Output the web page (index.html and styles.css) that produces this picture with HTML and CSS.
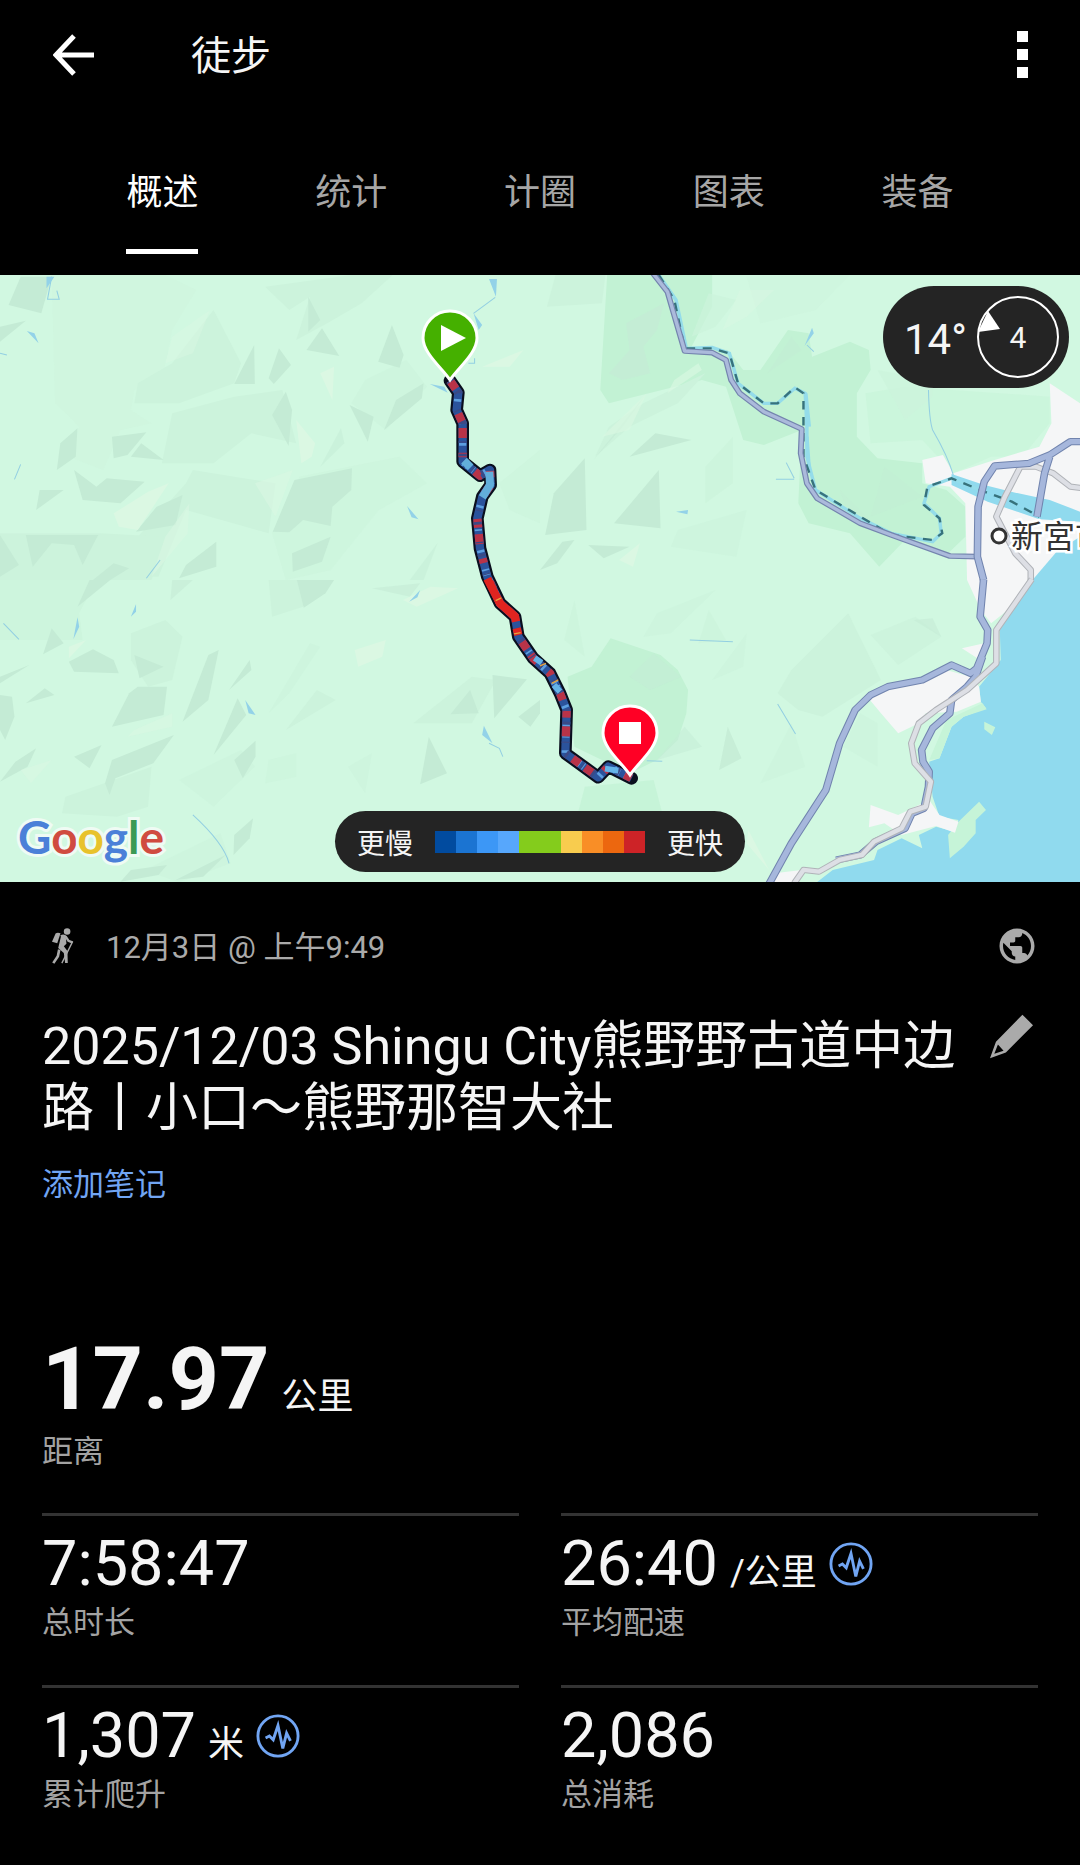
FILE: index.html
```html
<!DOCTYPE html>
<html lang="zh-CN">
<head>
  <meta charset="UTF-8" />
  <meta name="viewport" content="width=device-width, initial-scale=1" />
  <title>徒步</title>
  <link rel="stylesheet" href="styles.css">
</head>
<body>

  <header class="top-bar">
    <button class="icon-button" aria-label="返回">
      <svg width="42" height="42" viewBox="0 0 42 42"><path d="M41 21H4M21 2L3 21l18 19" fill="none" stroke="#fff" stroke-width="5" /></svg>
    </button>
    <h1>徒步</h1>
    <button class="icon-button menu-button" aria-label="更多">
      <svg width="12" height="48" viewBox="0 0 12 48"><path d="M0 0h11v11H0zM0 18h11v11H0zM0 36h11v11H0z" fill="#fff" /></svg>
    </button>
  </header>

  <nav class="tabs">
    <a class="tab active" href="#overview">概述</a>
    <a class="tab" href="#stats">统计</a>
    <a class="tab" href="#laps">计圈</a>
    <a class="tab" href="#charts">图表</a>
    <a class="tab" href="#gear">装备</a>
  </nav>

  <section class="map">
    <svg class="map-canvas" viewBox="0 275 1080 607" preserveAspectRatio="xMidYMid slice">
      <rect y="275" width="1080" height="607" fill="#d1f8e1" />

      <!-- Terrain, north west -->
      <g transform="translate(0 270) scale(.3444 .3333)">
        <g class="shade-soft">
          <path d="M150 15L480 15 570 60 500 180 470 330 390 360 380 420 440 460 350 480 300 600 200 560 230 470 160 400z" opacity=".3" />
          <path d="M620 120L700 280 680 340 520 400 390 400 400 340 500 280z" />
          <path d="M770 50L1020 15 1140 15 1050 100 950 160 860 210 900 80 840 120z" />
          <path d="M500 430L680 380 820 360 860 520 730 490 620 580 470 580z" />
          <path d="M560 600L800 640 780 790 540 720 460 920 340 920 400 800 540 640z" />
          <path d="M0 790L290 790 480 800 440 930 0 930z" />
          <path d="M1180 270L1240 350 1120 480 1020 400 1060 330z" opacity=".6" />
          <path d="M870 620L1160 560 1240 640 1100 720 960 900 830 930 790 790z" opacity=".5" />
          <path d="M1450 640L1568 540 1568 760 1480 720z" opacity=".5" />
        </g>
        <g class="shade">
          <path d="M60 20L150 20 120 130 25 105z" />
          <path d="M0 170L75 152 0 215z" />
          <path d="M738 225L740 342 680 342z" />
          <path d="M810 235L845 285 795 342 780 325z" />
          <path d="M935 175L985 258 890 240z" />
          <path d="M895 80L930 150 895 185z" />
          <path d="M1138 165L1172 255 1160 293 1098 275z" />
          <path d="M830 365L848 420 838 528 790 435z" />
          <path d="M1015 405L1085 440 1068 515z" />
          <path d="M1150 390L1230 340 1225 385 1115 480z" />
          <path d="M225 475L220 560 165 600 175 520z" />
          <path d="M325 500L425 487 370 555 330 565z" />
          <path d="M410 520L475 570 380 560z" />
          <path d="M215 600L280 650 310 625 420 635 350 700 240 690z" />
          <path d="M115 660L185 660 105 720z" />
          <path d="M855 630L1022 595 1020 660 965 710 960 768 880 750 840 787 792 785z" />
          <path d="M455 710L530 675 510 765 395 785z" />
          <path d="M75 795L285 795 240 885 215 825 150 820 95 890z" />
          <path d="M0 795L55 885 0 920z" />
          <path d="M628 815L628 890 520 925 540 885z" />
          <path d="M848 850L960 800 935 875 850 905z" />
          <path d="M270 930L330 880 375 895 320 930z" />
          <path d="M990 475L1000 520 930 590z" opacity=".5" />
          <path d="M1270 820L1190 930 1230 930z" opacity=".5" />
        </g>
        <g class="sand">
          <path d="M930 310L970 290 965 390z" />
          <path d="M860 450L915 520 905 560 875 580z" />
          <path d="M330 730L430 665 490 640 400 780 345 770z" />
          <path d="M1400 290L1520 240 1480 290z" />
          <path d="M740 640L850 600 800 740z" opacity=".5" />
          <path d="M500 200L610 120 560 250 480 280z" opacity=".4" />
          <path d="M480 800L550 700 545 790 440 920z" opacity=".5" />
        </g>
        <g class="stream">
          <path d="M150 20L138 88 172 88 165 62M0 250L20 255M60 583L42 628M465 870L425 925M1375 130L1438 82M1360 280h18v-15" />
          <path class="pond" d="M135 20L158 20 135 55zM78 183L100 190 112 220zM1182 708L1215 748 1195 742zM1420 27L1443 27 1440 80zM1375 130L1400 165 1390 180zM1248 342L1290 350 1300 368z" />
        </g>
      </g>

      <!-- Terrain, south west -->
      <g transform="translate(0 580) scale(.3444 .3333)">
        <g class="shade-soft">
          <path d="M0 0L280 0 230 100 240 180 0 180z" opacity=".7" />
          <path d="M380 160L480 120 530 170 500 300 430 320 380 240z" />
          <path d="M780 0L950 0 880 80 790 110z" />
          <path d="M190 650L440 560 430 680 340 710 180 700z" />
          <path d="M920 330L975 360 830 450z" />
          <path d="M1200 430L1370 290 1440 300 1370 430z" />
          <path d="M520 600L700 510 740 560 620 680z" opacity=".6" />
          <path d="M780 400L900 190 930 200 840 340z" opacity=".6" />
          <path d="M1010 560L1080 520 1060 640z" opacity=".6" />
          <path d="M780 540L860 520 860 590 770 610z" opacity=".5" />
          <path d="M420 870L640 760 670 850 520 907z" opacity=".6" />
        </g>
        <g class="shade">
          <path d="M320 0L225 80 260 0z" />
          <path d="M500 0L560 0 495 60z" opacity=".6" />
          <path d="M862 0L970 0 945 40 882 83z" />
          <path d="M1080 25L1220 10 1190 50z" opacity=".6" />
          <path d="M200 245L270 208 330 240 345 280 215 275z" />
          <path d="M390 225L475 260 405 295z" />
          <path d="M150 145L185 190 125 223z" />
          <path d="M605 225L635 210 605 360 530 425z" />
          <path d="M375 340L400 320 485 320 475 405 325 440z" />
          <path d="M725 240L730 270 665 330z" />
          <path d="M0 290L85 255 0 310z" />
          <path d="M0 345L35 350 42 410 15 480 0 450z" />
          <path d="M130 325L158 345 75 370z" />
          <path d="M105 505L80 560 0 605 45 545z" />
          <path d="M295 495L260 565 215 530z" />
          <path d="M325 540L505 465 445 550 335 595 318 645 305 610z" />
          <path d="M690 355L715 405 620 525z" />
          <path d="M742 482L742 530 705 595 680 540z" />
          <path d="M1245 470L1298 580 1220 613z" />
          <path d="M1430 285L1530 298 1435 415z" />
          <path d="M1365 330L1390 400 1308 403z" />
          <path d="M1568 360L1568 400 1540 440 1505 410z" />
          <path d="M735 715L725 775 678 825 680 765z" />
          <path d="M380 870L485 855 460 885 350 905z" />
          <path d="M655 825L590 890 510 900z" />
        </g>
        <g class="sand">
          <path d="M1170 60L1250 20 1330 25 1210 80z" />
          <path d="M1030 210L1120 180 1110 230 1040 260z" />
          <path d="M390 450L500 400 500 440 370 470z" opacity=".5" />
          <path d="M60 570L150 540 90 610z" opacity=".5" />
          <path d="M200 200L250 180 200 235z" />
        </g>
        <g class="stream">
          <path d="M10 130L55 178M560 705Q650 790 665 850M1420 490L1450 505 1460 530" />
          <path class="pond" d="M225 112L230 140 213 178zM395 72L395 95 380 110zM712 360L742 405 722 400zM1220 30L1212 52 1188 65zM1405 437L1430 490 1400 465z" />
        </g>
      </g>

      <!-- Terrain, north east -->
      <g transform="translate(540 270) scale(.3444 .3333)">
        <g class="forest">
          <path d="M195 15L500 15 500 110 440 230 545 240 590 300 640 300 720 180 780 190 790 260 900 215 955 240 960 300 920 370 920 500 980 565 1110 580 1110 640 1180 660 1235 710 1235 800 1180 855 1060 810 985 890 900 790 780 760 750 700 760 480 650 525 590 510 540 350 470 330 200 400 175 360z" />
          <path d="M945 370L1060 350 1480 380 1480 460 1400 560 1310 560 1200 610 1110 510 960 520z" opacity=".4" />
        </g>
        <g class="shade-soft">
          <path d="M45 15L190 15 180 100 20 110z" />
          <path d="M490 70L570 90 510 170 440 200z" opacity=".7" />
          <path d="M300 400L480 310 400 400 260 470 160 560 200 470z" />
          <path d="M480 590L560 500 560 640 480 700z" opacity=".7" />
          <path d="M400 780L600 720 570 860 380 830z" opacity=".6" />
          <path d="M980 300L1140 330 1140 380 1060 450z" opacity=".7" />
          <path d="M600 20L900 15 800 120 640 160z" opacity=".4" />
        </g>
        <g class="shade">
          <path d="M360 100L340 180 300 230 320 310 240 330 200 310 260 240 250 160z" opacity=".7" />
          <path d="M130 565L135 780 15 795 40 670z" />
          <path d="M345 600L350 775 215 760z" />
          <path d="M335 490L440 510 260 560z" />
          <path d="M140 825L260 830 185 865z" />
          <path d="M65 815L100 810 50 880 0 900z" />
          <path d="M310 370L240 470 155 570z" opacity=".7" />
          <path d="M730 200L760 240 660 310z" opacity=".4" />
          <path d="M1000 590L1110 680 960 740z" opacity=".3" />
          <path d="M870 660L990 780 900 750z" opacity=".3" />
        </g>
        <g class="sand">
          <path d="M390 330L460 280 470 300 370 370z" opacity=".6" />
          <path d="M180 500L310 370 260 480z" opacity=".6" />
          <path d="M230 870L290 820 270 890z" />
          <path d="M580 60L680 60 600 140 530 180z" opacity=".4" />
        </g>
        <path class="urban" d="M1110 570L1170 555 1200 610 1320 570 1450 530 1485 460 1480 340 1568 400 1568 930 1240 930 1235 700 1190 650 1120 640z" />
        <path class="sea" d="M1195 612L1290 645 1380 668 1480 690 1568 725 1568 755 1450 748 1300 695 1195 645z" />
        <path class="sea" d="M1430 930L1500 845 1568 800 1568 930z" />
        <path class="river" d="M345 15L395 90 425 235 500 232 550 250 575 340 650 400 690 400 740 355 770 370 775 470 775 560 800 660 930 745 1020 790 1140 815 1165 790 1160 745 1115 700 1130 650 1195 625 1290 665" />
        <path class="river" d="M772 370L782 470M775 500L782 600" stroke-width="14" />
        <g class="stream">
          <path d="M1128 360Q1130 450 1140 480Q1185 560 1200 615M685 628L738 628M715 578L738 625M775 225L795 245" />
          <path class="pond" d="M790 173L795 190 768 228zM395 725L430 720 428 733z" />
        </g>
        <path class="border-line" d="M345 15L390 90 420 235 500 235 550 250 575 340 650 400 690 400 740 352 765 370 765 560 800 660 930 740 1020 795 1140 810 1168 790 1160 745 1115 705 1125 650 1195 625 1290 665 1370 695 1450 740" />
      </g>

      <!-- Terrain and coast, south east -->
      <g transform="translate(540 580) scale(.3444 .3333)">
        <g class="forest">
          <path d="M205 175L350 225 400 270 430 330 425 400 400 480 340 540 240 590 180 540 100 500 80 290 150 260z" />
          <path d="M130 620L330 600 355 700 110 700z" opacity=".7" />
        </g>
        <g class="shade-soft">
          <path d="M895 100L990 300 820 410 750 390 690 340 730 270z" />
          <path d="M960 165L1090 110 1165 170 1040 255z" opacity=".8" />
          <path d="M930 400L980 430 980 560 880 500z" opacity=".6" />
          <path d="M730 430L770 560 640 610z" opacity=".6" />
          <path d="M100 60L70 180 130 230z" opacity=".7" />
          <path d="M340 100L510 30 380 160 300 170z" opacity=".6" />
          <path d="M490 90L540 180 460 190z" opacity=".7" />
          <path d="M600 160L590 260 500 300z" opacity=".6" />
        </g>
        <g class="shade">
          <path d="M545 440L585 535 520 570z" opacity=".8" />
          <path d="M1085 120L1140 115 1165 170z" opacity=".6" />
          <path d="M330 220L410 290 320 330 260 290z" opacity=".5" />
          <path d="M420 440L470 500 340 540z" opacity=".5" />
        </g>
        <path class="sea" d="M1432 0L1335 150 1338 240 1275 320 1280 365 1295 385 1230 410 1195 440 1160 535 1130 545 1140 650 1160 710 1215 720 1205 755 1150 740 1100 765 1110 805 1050 775 980 810 970 840 850 870 800 910 1568 910 1568 0z" />
        <path class="forest-flat" d="M1185 765L1215 725 1275 665 1295 690 1265 720 1265 760 1230 800 1190 835zM1290 425L1322 442 1312 465 1290 448zM1180 420L1285 370 1297 388 1230 410 1195 440 1160 535 1130 540z" />
        <path class="urban" d="M950 350L1180 270 1250 290 1275 320 1280 365 1210 395 1120 400 1100 430 1040 460 990 400z" />
        <path class="urban" d="M1240 0L1432 0 1370 80 1310 130 1280 90zM1225 205L1290 190 1270 235zM960 675L1040 705 1130 660 1160 705 1215 725 1205 758 1150 738 1050 765 1000 730 955 742zM680 880L760 870 740 910 670 910z" />
        <path class="sand" d="M605 750L665 870 600 790z" />
        <g class="stream"><path d="M435 180L560 185M690 372L742 462M310 542L355 544" /></g>
      </g>

      <!-- Roads: a dark casing with a light line on top -->
      <defs>
        <g id="highway-north">
          <path d="M1578 515H1540L1480 555 1420 580 1320 588 1290 635 1272 710 1270 860 1288 930M1480 560L1465 610 1443 740" />
        </g>
        <g id="road-north">
          <path d="M328 10L370 65 420 243 500 248 540 270 555 330 580 370 650 425 760 477 757 550 775 640 805 685 930 760 1020 795 1190 858 1270 860" />
        </g>
        <g id="rail-north">
          <path d="M1578 655L1540 650 1490 610 1440 590 1395 590 1350 680 1325 740 1380 850 1425 900V930" />
        </g>
        <g id="highway-south">
          <path d="M1288 -2L1278 110 1300 150 1298 190 1268 265 1250 280 1195 255 1110 300 1010 320 960 345 915 390 870 490 830 630 730 790 665 912" />
          <path d="M1285 230L1265 290 1240 320 1195 360 1190 400 1140 445 1108 510 1112 545 1130 575 1128 620 1115 685 1080 700 1060 745 975 785 930 825 860 840" />
        </g>
        <g id="rail-south">
          <path d="M1428 -2L1325 150V250L1240 330 1150 390 1100 430 1078 490 1088 550 1135 605 1120 680 1075 695 1050 745 970 785 935 825 870 840 810 875 765 870 738 910" />
        </g>
      </defs>
      <g transform="translate(540 270) scale(.3444 .3333)">
        <use href="#rail-north" class="rail-case" /><use href="#rail-north" class="rail" />
        <use href="#road-north" class="road-case" /><use href="#road-north" class="road" />
        <use href="#highway-north" class="highway-case" /><use href="#highway-north" class="highway" />
      </g>
      <g transform="translate(540 580) scale(.3444 .3333)">
        <use href="#highway-south" class="highway-case" /><use href="#highway-south" class="highway" />
        <use href="#rail-south" class="rail-case" /><use href="#rail-south" class="rail" />
      </g>

      <circle cx="999" cy="536" r="7" fill="#fff" stroke="#333" stroke-width="3" />
      <text class="place" x="1011" y="548">新宮市</text>

      <!-- Recorded track, coloured by pace -->
      <g transform="translate(400 290) scale(.3333)" class="track">
        <defs>
          <path id="track" d="M150 272L175 308 170 360 188 400 188 515 240 557 270 540 272 585 247 620 232 685 240 775 262 860 300 940 345 980 355 1040 400 1105 450 1150 480 1210 500 1260 496 1390 595 1462 625 1430 695 1465" />
        </defs>
        <use href="#track" stroke="#0a0f1e" stroke-width="38" stroke-linecap="round" />
        <use href="#track" stroke="#2b539c" stroke-width="25" />
        <use href="#track" stroke="#5c9fe0" stroke-width="22" stroke-dasharray="5 16 4 38 8 51 5 9" />
        <use href="#track" stroke="#b93348" stroke-width="25" stroke-dasharray="30 78 26 20 30 44 14 60 22 35 20 26" />
        <use href="#track" stroke="#3b4a86" stroke-width="25" stroke-dasharray="4 33 8 52" />
        <path d="M192 512L212 532M268 545L270 585 247 622" stroke="#62aedb" stroke-width="24" />
        <path d="M262 866L300 940 345 980 348 995M350 1015L355 1035" stroke="#e02420" stroke-width="25" />
        <path d="M287 932L304 924M342 1032L362 1028M420 1128L438 1120M455 1180L475 1170" stroke="#e7a33a" stroke-width="4" />
        <path d="M404 1104L425 1118M462 1185L480 1205M615 1436L655 1442" stroke="#64b4e8" stroke-width="18" />
      </g>

      <!-- Start and finish pins -->
      <g stroke="#fff" stroke-width="3">
        <path d="M450 380C442 368 423 353 423 338a27 27 0 0 1 54 0C477 353 458 368 450 380z" fill="#45b000" />
        <path d="M630 775C622 763 603 748 603 733a27 27 0 0 1 54 0C657 748 638 763 630 775z" fill="#ff0025" />
      </g>
      <path d="M441 325L466 338 441 351z" fill="#fff" />
      <path d="M619 722h22v22h-22z" fill="#fff" />
    </svg>

    <div class="weather">
      <span class="temperature">14°</span>
      <svg width="84" height="84" viewBox="0 0 84 84">
        <circle cx="42" cy="42" r="40" fill="none" stroke="#fff" stroke-width="2" />
        <path d="M12 16L24 34 2 37z" fill="#fff" />
        <text class="wind" x="42" y="53" text-anchor="middle">4</text>
      </svg>
    </div>

    <div class="google">
      <span class="g-blue">G</span><span class="g-red">o</span><span class="g-yellow">o</span><span class="g-blue">g</span><span class="g-green">l</span><span class="g-red">e</span>
    </div>

    <div class="legend">
      <span>更慢</span>
      <div class="pace-bar"></div>
      <span>更快</span>
    </div>
  </section>

  <main class="details">
    <div class="meta">
      <svg width="25" height="38" viewBox="150 80 76 114">
        <circle cx="202" cy="93" r="10" fill="#aaa" />
        <path d="M156 124L167 99Q172 95 182 98L172 129z" fill="#aaa" />
        <path d="M183 108Q192 102 199 110L206 121 218 126" fill="none" stroke="#aaa" stroke-width="7" />
        <path d="M184 105L198 109 200 130 192 138 203 152 204 189 196 189 192 158 175 143z" fill="#aaa" />
        <path d="M178 148L174 168 160 189" fill="none" stroke="#aaa" stroke-width="8" />
        <path d="M219 123L186 189" stroke="#aaa" stroke-width="4" />
      </svg>
      <time datetime="2025-12-03T09:49">12月3日 @ 上午9:49</time>
      <svg class="globe" width="42" height="42" viewBox="0 0 24 24">
        <path fill="#aaa" d="M12 2C6.480 2 2 6.480 2 12s4.480 10 10 10 10-4.480 10-10S17.520 2 12 2zm-1 17.930c-3.950-.490-7-3.850-7-7.930 0-.620.080-1.210.210-1.790L9 15v1c0 1.100.900 2 2 2v1.930zm6.900-2.540c-.260-.810-1-1.390-1.900-1.390h-1v-3c0-.550-.450-1-1-1H8v-2h2c.550 0 1-.450 1-1V7h2c1.100 0 2-.900 2-2v-.410c2.930 1.190 5 4.060 5 7.410 0 2.080-.800 3.970-2.100 5.390z" />
      </svg>
    </div>

    <div class="title-row">
      <h2>2025/12/03 Shingu City熊野野古道中边路丨小口～熊野那智大社</h2>
      <button class="icon-button" aria-label="编辑">
        <svg width="45" height="45" viewBox="90 336 134 136">
          <path fill="#aaa" fill-rule="evenodd" d="M190 338L222 370 140 452 92 470 110 420zM116 428L105 456 133 447z" />
        </svg>
      </button>
    </div>

    <a class="add-note" href="#note">添加笔记</a>

    <div class="stat main-stat">
      <div class="value">17.97 <span class="unit">公里</span></div>
      <div class="label">距离</div>
    </div>

    <div class="stats">
      <div class="stat">
        <div class="value">7:58:47</div>
        <div class="label">总时长</div>
      </div>
      <div class="stat">
        <div class="value">26:40 <span class="unit">/公里</span>
          <svg class="pulse" width="44" height="44" viewBox="0 0 46 46"><circle cx="23" cy="23" r="21" /><path d="M10 25l4-2 4 4 5-15 5 24 4-16 4 8" /></svg>
        </div>
        <div class="label">平均配速</div>
      </div>
      <div class="stat">
        <div class="value">1,307 <span class="unit">米</span>
          <svg class="pulse" width="44" height="44" viewBox="0 0 46 46"><circle cx="23" cy="23" r="21" /><path d="M10 25l4-2 4 4 5-15 5 24 4-16 4 8" /></svg>
        </div>
        <div class="label">累计爬升</div>
      </div>
      <div class="stat">
        <div class="value">2,086</div>
        <div class="label">总消耗</div>
      </div>
    </div>
  </main>

</body>
</html>
```
FILE: styles.css
```css
* {
  box-sizing: border-box;
}

body {
  margin: 0;
  background: #000;
  color: #f5f5f5;
  font-family: Roboto, "Noto Sans CJK SC", sans-serif;
}

h1,
h2 {
  margin: 0;
  font-weight: 400;
}

.icon-button {
  display: flex;
  padding: 0;
  border: none;
  background: none;
  cursor: pointer;
}

/* Header */
.top-bar {
  display: flex;
  align-items: center;
  height: 110px;
  padding: 0 51px 0 53px;
}

.top-bar h1 {
  margin-left: 96px;
  padding-top: 4px;
  font-size: 40px;
  line-height: 48px;
}

.menu-button {
  margin-left: auto;
}

.tabs {
  display: grid;
  grid-template-columns: repeat(5, 1fr);
  justify-items: center;
  padding: 57px 68px 21px;
}

.tab {
  padding-bottom: 30px;
  border-bottom: 5px solid transparent;
  color: #a6a6a6;
  font-size: 36px;
  line-height: 52px;
  text-decoration: none;
}

.tab.active {
  border-color: #fff;
  color: #fff;
}

/* Map */
.map {
  position: relative;
  aspect-ratio: 1080 / 607;
  overflow: hidden;
}

.map-canvas {
  display: block;
  width: 100%;
  height: 100%;
}

.shade {
  fill: #c4ebd5;
}

.shade-soft {
  fill: #ccf3dc;
}

.forest {
  fill: #c2f2d4;
}

.forest-flat {
  fill: #c6f4d8;
}

.sand {
  fill: #dbf8e3;
}

.urban {
  fill: #f5f6f7;
}

.sea {
  fill: #90daee;
}

.stream {
  fill: none;
  stroke: #93cfe2;
  stroke-width: 3;
}

.pond {
  fill: #93d2e8;
  stroke: none;
}

.river {
  fill: none;
  stroke: #94dcea;
  stroke-width: 10;
}

.border-line {
  fill: none;
  stroke: #37727c;
  stroke-width: 7;
  stroke-dasharray: 26 22;
}

.highway-case,
.highway,
.road-case,
.road,
.rail-case,
.rail {
  fill: none;
  stroke-linejoin: round;
}

.highway-case {
  stroke: #7184ae;
  stroke-width: 22;
}

.highway {
  stroke: #a6b7dc;
  stroke-width: 16;
}

.road-case {
  stroke: #7484ae;
  stroke-width: 17;
}

.road {
  stroke: #abbadb;
  stroke-width: 10;
}

.rail-case {
  stroke: #b0b3b8;
  stroke-width: 19;
}

.rail {
  stroke: #dddfe5;
  stroke-width: 13;
}

.place {
  fill: #333;
  stroke: #fff;
  stroke-width: 5;
  paint-order: stroke;
  font-family: "Noto Sans CJK JP", sans-serif;
  font-size: 32px;
}

.track {
  fill: none;
  stroke-linejoin: round;
}

.weather {
  position: absolute;
  top: 11px;
  right: 11px;
  display: flex;
  align-items: center;
  justify-content: space-between;
  width: 186px;
  height: 102px;
  padding: 0 9px 0 21px;
  border-radius: 51px;
  background: #242424;
}

.temperature {
  padding-top: 4px;
  font-size: 42px;
}

.wind {
  fill: #f5f5f5;
  font-size: 30px;
}

.google {
  position: absolute;
  left: 18px;
  bottom: 17px;
  font-family: Lato, sans-serif;
  font-size: 46px;
  line-height: 56px;
  -webkit-text-stroke: 6px #effbf4;
  paint-order: stroke fill;
}

.g-blue { color: #4b80d8; }
.g-red { color: #d04b40; }
.g-yellow { color: #e8c22c; }
.g-green { color: #3b9a55; }

.google {
  font-weight: 700;
}

.legend {
  position: absolute;
  left: 50%;
  bottom: 10px;
  display: flex;
  align-items: center;
  gap: 22px;
  height: 61px;
  padding: 0 22px;
  border-radius: 31px;
  background: #242424;
  font-size: 28px;
  white-space: nowrap;
  transform: translateX(-50%);
}

.pace-bar {
  width: 210px;
  height: 22px;
  background: linear-gradient(to right,
    #014b9f 10%, #1b74d2 10% 20%, #3c97f6 20% 30%, #57a7fc 30% 40%,
    #84cc1c 40% 60%, #f8cc4e 60% 70%, #f98e26 70% 80%, #ec670f 80% 90%, #cd2327 90%);
}

/* Activity details */
.details {
  padding: 42px 42px 50px;
}

.meta {
  display: flex;
  align-items: center;
  height: 44px;
  padding-left: 8px;
  color: #aaa;
  font-size: 31px;
}

.meta time {
  margin-left: 31px;
  padding-bottom: 4px;
}

.globe {
  margin-left: auto;
}

.title-row {
  display: flex;
  align-items: flex-start;
  justify-content: space-between;
  margin-top: 46px;
  padding-right: 4px;
}

.title-row h2 {
  flex: 1;
  max-width: 930px;
  padding-top: 2px;
  font-size: 52px;
  line-height: 62px;
}

.add-note {
  display: block;
  margin-top: 25px;
  color: #71a5f3;
  font-size: 31px;
  line-height: 40px;
  text-decoration: none;
}

.value {
  display: flex;
  align-items: baseline;
  gap: 12px;
  height: 64px;
  font-size: 63px;
  line-height: 64px;
}

.unit {
  font-size: 36px;
}

.label {
  margin-top: 7px;
  color: #a3a3a3;
  font-size: 31px;
  line-height: 40px;
}

.main-stat {
  margin: 129px 0 41px;
}

.main-stat .value {
  height: 91px;
  font-size: 88px;
  font-weight: 700;
  line-height: 90px;
}

.main-stat .unit {
  font-weight: 400;
}

.stats {
  display: grid;
  grid-template-columns: 1fr 1fr;
  gap: 42px;
}

.stats .stat {
  padding-top: 16px;
  border-top: 3px solid #333;
}

.pulse {
  align-self: center;
  fill: none;
  stroke: #71a5f3;
  stroke-width: 3;
}
```
